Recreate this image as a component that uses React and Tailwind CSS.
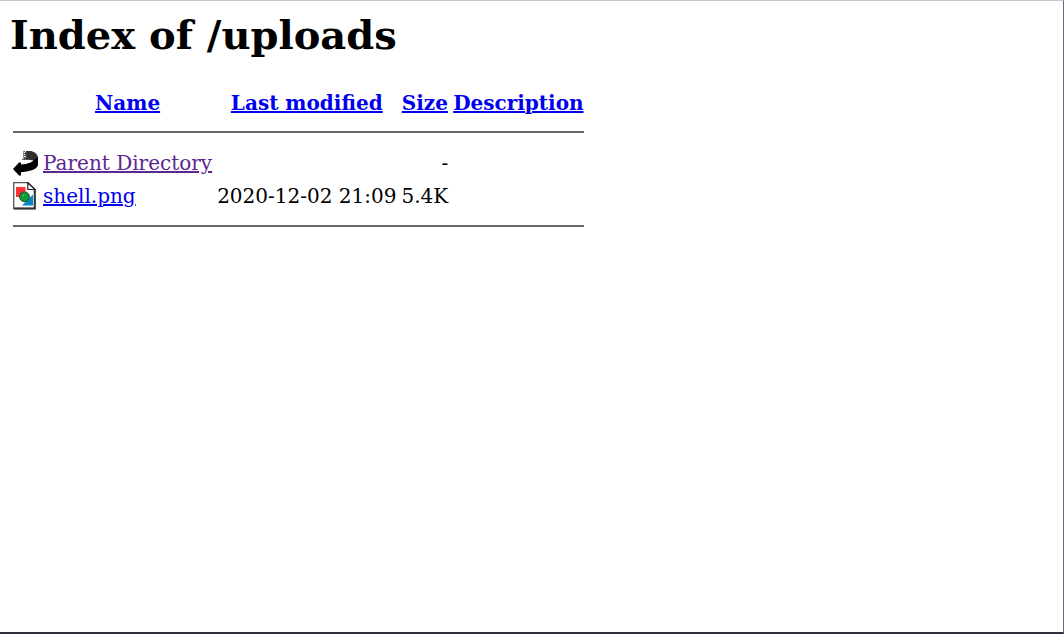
const linkClass = "text-[#0000ee] underline";

function BackIcon() {
  return (
    <svg className="block h-[25px] w-[25px]" viewBox="0 0 25 25" aria-hidden="true">
      <path d="M13 0h5l3 1 2.500 2L25 6V8l-4 1.500-8-1z" fill="#303030" />
      <path d="M10 0h2v1h-2zM12 1h2v1h-2zM10 2h3v1h-3zM12 3h2v1h-2zM10 4h3v1h-3zM11 6h3v1h-3zM10 7h3v1h-3zM9 8h6v1H9z" fill="#555" />
      <path d="M10 0h1v9h-1z" fill="#888" />
      <path d="M25 6V14Q24 17.500 19 19.300Q14 21 8 21.200V24.500H6L0 18L6 11.500H8V13.600Q13 13.500 17.500 11.500Q20 10.500 21 8.500Q23 8 25 6Z" fill="#000" />
    </svg>
  );
}

function ImageIcon() {
  return (
    <svg className="block h-[28px] w-[25px]" viewBox="0 0 25 28" aria-hidden="true">
      <path d="M.7.7H15L22 7.500V26.500H.7z" fill="#fff" stroke="#555" strokeWidth="1.300" />
      <path d="M21.700 7.500V26.500H1" fill="none" stroke="#333" strokeWidth="2" />
      <path d="M14.800.7V7.500H22z" fill="#fff" stroke="#222" strokeWidth="1.200" />
      <path d="M3 5h9.500v10H3z" fill="#ff3131" />
      <path d="M20 12.500V23.500H9z" fill="#0788c5" />
      <circle cx="11.500" cy="14.800" r="4.900" fill="#109b38" stroke="#174d29" strokeWidth="1" />
      <circle cx="10.300" cy="13.500" r="1.200" fill="#3fb558" />
    </svg>
  );
}

function Rule() {
  return (
    <tr>
      <th colSpan="5" className="p-px">
        <hr className="mt-[10px] mb-[12px] h-[2px] border-0 bg-[#686868]" />
      </th>
    </tr>
  );
}

export default function App() {
  return (
    <main className="min-h-screen border-t border-r border-b-2 border-t-[#c8c8c8] border-r-[#6b6b78] border-b-[#302e3c] bg-white pl-[9px] font-['DejaVu_Serif',serif] text-[20px] leading-[25px] text-black">
      <h1 className="pt-[10px] pl-px text-[40px] leading-[48px] font-bold">Index of /uploads</h1>
      <table className="mt-[28px] border-separate border-spacing-[3px] whitespace-nowrap">
        <thead>
          <tr>
            <th className="p-px" aria-label="Type" />
            <th className="p-px"><a className={linkClass} href="?C=N;O=D">Name</a></th>
            <th className="p-px"><a className={linkClass} href="?C=M;O=A">Last modified</a></th>
            <th className="p-px"><a className={linkClass} href="?C=S;O=A">Size</a></th>
            <th className="p-px"><a className={linkClass} href="?C=D;O=A">Description</a></th>
          </tr>
        </thead>
        <tbody className="leading-[27px]">
          <Rule />
          <tr>
            <td className="p-px"><BackIcon /></td>
            <td className="p-px"><a className="text-[#5c2791] underline" href="/">Parent Directory</a></td>
            <td className="p-px" />
            <td className="p-px text-right">-</td>
            <td className="p-px" />
          </tr>
          <tr>
            <td className="p-px"><ImageIcon /></td>
            <td className="p-px"><a className={linkClass} href="shell.png">shell.png</a></td>
            <td className="p-px text-right">2020-12-02 21:09</td>
            <td className="p-px text-right">5.4K</td>
            <td className="p-px" />
          </tr>
          <Rule />
        </tbody>
      </table>
    </main>
  );
}
